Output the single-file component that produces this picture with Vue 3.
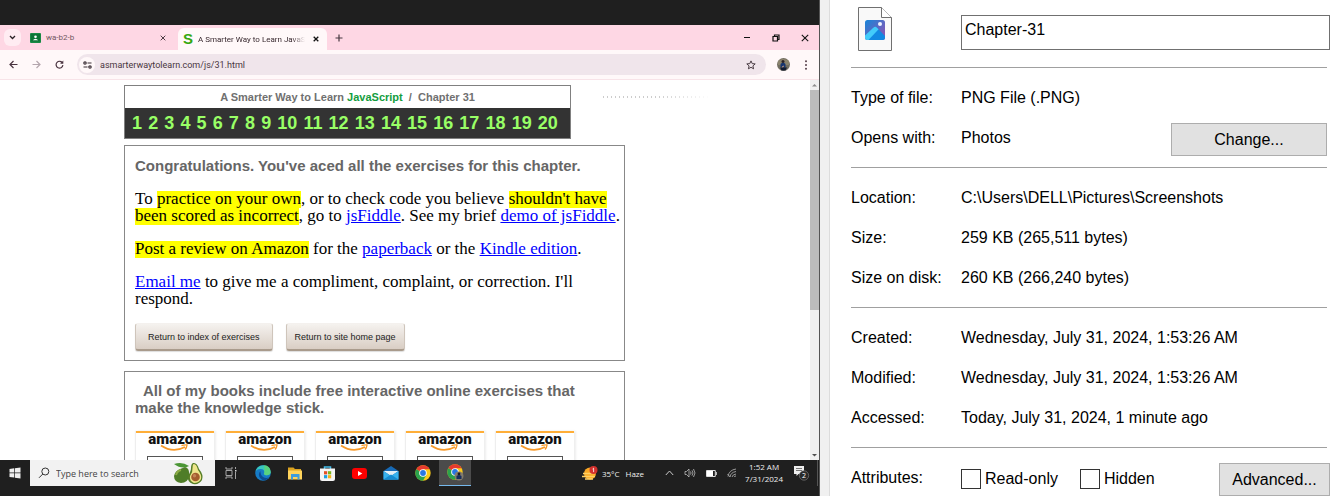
<script setup>
import { ref } from 'vue'

const chapters = Array.from({ length: 20 }, (_, i) => i + 1)
const books = [1, 2, 3, 4, 5]
const url = ref('asmarterwaytolearn.com/js/31.html')
const query = ref('')
const fileName = ref('Chapter-31')
const readOnly = ref(false)
const hidden = ref(false)
const location = [
  ['Location:', 'C:\\Users\\DELL\\Pictures\\Screenshots'],
  ['Size:', '259 KB (265,511 bytes)'],
  ['Size on disk:', '260 KB (266,240 bytes)'],
]
const dates = [
  ['Created:', 'Wednesday, July 31, 2024, 1:53:26 AM'],
  ['Modified:', 'Wednesday, July 31, 2024, 1:53:26 AM'],
  ['Accessed:', 'Today, July 31, 2024, 1 minute ago'],
]
</script>

<template>
  <main class="screen">
    <section class="desktop">
      <div class="tabs">
        <button class="tab-menu" aria-label="Search tabs">
          <svg width="7" height="7" viewBox="0 0 7 7"><path d="M1 2l2.500 2.500L6 2" fill="none" stroke="#2a2226" stroke-width="1.300" /></svg>
        </button>
        <div class="tab">
          <svg width="11" height="10" viewBox="0 0 11 10"><rect width="11" height="10" rx="1" fill="#188a45" /><rect x="1" y="1" width="9" height="7.500" fill="#0c7436" /><circle cx="5.500" cy="3.800" r="1.300" fill="#fff" /><path d="M2.800 7.200q2.700-3 5.400 0z" fill="#fff" /></svg>
          <span class="tab-title">wa-b2-b</span>
          <button class="close" aria-label="Close tab"><svg width="6" height="6" viewBox="0 0 6 6"><path d="M.7.7l4.600 4.600M5.300.7L.7 5.300" stroke="#4d3d45" /></svg></button>
        </div>
        <div class="tab active">
          <span class="s-logo">S</span>
          <span class="tab-title">A Smarter Way to Learn JavaSc</span>
          <button class="close" aria-label="Close tab"><svg width="6" height="6" viewBox="0 0 6 6"><path d="M.7.7l4.600 4.600M5.300.7L.7 5.300" stroke="#111" stroke-width="1.300" /></svg></button>
        </div>
        <button class="new-tab" aria-label="New tab"><svg width="8" height="8" viewBox="0 0 8 8"><path d="M4 .5v7M.5 4h7" stroke="#463840" stroke-width="1.200" /></svg></button>
        <div class="window-controls">
          <button aria-label="Minimize"><svg width="8" height="8" viewBox="0 0 8 8"><path d="M1 3.500h6" stroke="#111" /></svg></button>
          <button aria-label="Restore"><svg width="8" height="8" viewBox="0 0 8 8"><path d="M1 2.500h4.500V7H1zM2.500 2.500V1H7v4.500H5.500" fill="none" stroke="#111" stroke-width="1.200" /></svg></button>
          <button aria-label="Close"><svg width="8" height="8" viewBox="0 0 8 8"><path d="M.8.8l6.400 6.400M7.200.8L.8 7.200" stroke="#111" stroke-width="1.100" /></svg></button>
        </div>
      </div>

      <div class="toolbar">
        <div class="nav-buttons">
          <button aria-label="Back"><svg width="9" height="9" viewBox="0 0 9 9"><path d="M8.500 4.500H1M4.500 1L1 4.500 4.500 8" fill="none" stroke="#4a3440" stroke-width="1.200" /></svg></button>
          <button aria-label="Forward"><svg width="9" height="9" viewBox="0 0 9 9"><path d="M.5 4.500H8M4.500 1L8 4.500 4.500 8" fill="none" stroke="#b4a6ad" stroke-width="1.200" /></svg></button>
          <button aria-label="Reload"><svg width="9" height="9" viewBox="0 0 9 9"><path d="M7.500 3A3.400 3.400 0 1 0 7.900 5.200" fill="none" stroke="#4a3440" stroke-width="1.200" /><path d="M8.300.6v3.200H5.100z" fill="#4a3440" /></svg></button>
        </div>
        <div class="omnibox">
          <span class="site-info"><svg width="9" height="8" viewBox="0 0 9 8"><g fill="none" stroke="#3b2f35" stroke-width="1.200"><circle cx="2" cy="2" r="1.200" /><path d="M4.500 2h4M.5 6h4" /><circle cx="7" cy="6" r="1.200" /></g></svg></span>
          <input v-model="url" aria-label="Address" />
          <button aria-label="Bookmark"><svg width="10" height="10" viewBox="0 0 10 10"><path d="M5 .9l1.200 2.700 3 .3-2.300 2 .7 2.900L5 7.300 2.400 8.800l.7-2.900-2.300-2 3-.3z" fill="none" stroke="#4a3d44" /></svg></button>
        </div>
        <svg width="13" height="13" viewBox="0 0 13 13"><circle cx="6.500" cy="6.500" r="6.500" fill="#716d60" /><path d="M1 3q5-4 11 0v4H1z" fill="#8b846e" /><circle cx="6" cy="3.500" r="1.500" fill="#2b2224" /><path d="M3.500 9V6q2.500-2.500 5 0v4z" fill="#18366f" /><path d="M3 9.500h7L8.500 12.500h-4z" fill="#131c32" /><path d="M5 9l2-1" stroke="#c99779" /></svg>
        <button class="more" aria-label="Menu"><svg width="4" height="10" viewBox="0 0 4 10"><g fill="#56404b"><circle cx="2" cy="1.200" r="1" /><circle cx="2" cy="5" r="1" /><circle cx="2" cy="8.800" r="1" /></g></svg></button>
      </div>

      <div class="page">
        <div class="content">
          <div class="top-row">
            <header class="chapter-head">
              <div class="chapter-title">A Smarter Way to Learn <b>JavaScript</b> &nbsp;/&nbsp; Chapter 31</div>
              <nav class="numbers"><a v-for="n in chapters" :key="n" href="#">{{ n }}</a></nav>
            </header>
            <div class="dots"></div>
          </div>
          <article class="box">
            <h2>Congratulations. You've aced all the exercises for this chapter.</h2>
            <p>To <mark>practice on your own</mark>, or to check code you believe <mark>shouldn't have<br>been scored as incorrect</mark>, go to <a href="#">jsFiddle</a>. See my brief <a href="#">demo of jsFiddle</a>.</p>
            <p><mark>Post a review on Amazon</mark> for the <a href="#">paperback</a> or the <a href="#">Kindle edition</a>.</p>
            <p><a href="#">Email me</a> to give me a compliment, complaint, or correction. I'll<br>respond.</p>
            <div class="actions">
              <button>Return to index of exercises</button>
              <button>Return to site home page</button>
            </div>
          </article>
          <article class="box books">
            <h2><span class="indent">All of my books include free interactive online exercises that</span><br>make the knowledge stick.</h2>
            <div class="cards">
              <div v-for="b in books" :key="b" class="card">
                <span class="amazon">amazon</span>
                <svg width="30" height="8" viewBox="0 0 30 8"><path d="M1 1.500q12 8 24 1.500" fill="none" stroke="#f79a2b" stroke-width="1.700" /><path d="M21.500 1.600q3-1 5.500-.6-.2 2.500-2 4.500" fill="none" stroke="#f79a2b" stroke-width="1.400" /></svg>
                <div class="cover"></div>
              </div>
            </div>
          </article>
        </div>
        <div class="scrollbar">
          <svg width="9" height="10" viewBox="0 0 9 10"><path d="M2 6.500h5L4.500 4z" fill="#8b8b8b" /></svg>
          <div class="track"><div class="thumb"></div></div>
          <svg width="9" height="10" viewBox="0 0 9 10"><path d="M2 4h5L4.500 6.500z" fill="#505050" /></svg>
        </div>
      </div>

      <footer class="taskbar">
        <button class="start" aria-label="Start"><svg width="12" height="12" viewBox="0 0 12 12"><path d="M.5 2l4.700-.7v4.300H.5zM5.900 1.200L11.500.4v5.200H5.900zM.5 6.300h4.700v4.300l-4.700-.7zM5.900 6.300h5.600v5.300l-5.600-.8z" fill="#eee" /></svg></button>
        <div class="search">
          <svg width="12" height="12" viewBox="0 0 12 12"><circle cx="7.300" cy="4.500" r="3.500" fill="none" stroke="#333" /><path d="M4.800 7L1 10.800" stroke="#333" /></svg>
          <input v-model="query" placeholder="Type here to search" aria-label="Type here to search" />
          <svg width="32" height="23" viewBox="0 0 32 23"><path d="M1 2Q9-1 16 4 9 8 1 2" fill="#4b9635" /><path d="M12 5q5 1 4 9-1 7-8 7-7-1-7-7 1-5 6-7 3-1 5-2" fill="#4f7d28" /><path d="M3 13q1-4 5-5" fill="none" stroke="#8fac46" stroke-width="2" /><path d="M20 1q4-1 6 6 5 6 3 11-3 5-9 4-6-2-5-8 3-5 3-8 0-4 2-5" fill="#567e27" /><path d="M20.500 2q3-.5 4.500 6 4 5 3 9-2 4-7 4-5-2-4-7 3-4 2.500-8 0-3 1-4" fill="#eee58b" /><circle cx="22.500" cy="15" r="4.300" fill="#a45d2e" /><circle cx="21.500" cy="13.800" r="1.700" fill="#c38455" /></svg>
        </div>
        <div class="apps">
          <button aria-label="Task view"><svg width="12" height="12" viewBox="0 0 12 12"><path d="M1 0v2h6V0M1 12v-2h6v2M1 3.500h6v5H1zM10.500 0v2M10.500 5v7" fill="none" stroke="#a5a5a5" /><path d="M10 3h1.500v1.500H10z" fill="#ddd" /></svg></button>
          <button aria-label="Edge"><svg width="16" height="16" viewBox="0 0 16 16"><circle cx="8" cy="8" r="7.800" fill="#167bc6" /><path d="M.3 7Q2 .2 8.500.2q7 .3 7.200 7Q15 11 10 10q-2-.8-.7-2.200Q9.800 4 5.500 4 1.500 4 .3 7" fill="#39c8bb" /><path d="M9 .3q6.500.4 6.700 6.900Q15 11 10 10q-2-.8-.7-2.200Q10 3 9 .3" fill="#65d665" opacity=".7" /><path d="M5.500 6q-3.500 4 .5 8 4 3 8-1.500-3 1.200-6-.5Q5 9.500 5.500 6" fill="#0d4c91" /></svg></button>
          <button aria-label="File Explorer"><svg width="14" height="13" viewBox="0 0 14 13"><path d="M0 .5h5.500L7 2h6v3H0z" fill="#dba321" /><path d="M0 3.500h14v9H0z" fill="#ffd45c" /><path d="M3 7h8.500v5.500h-2V10H5v2.500H3z" fill="#3d9ddd" /></svg></button>
          <button aria-label="Store"><svg width="15" height="15" viewBox="0 0 15 15"><path d="M4.500 3V1h6v2" fill="none" stroke="#47bde9" stroke-width="1.500" /><path d="M0 2.500h15V13q0 2-2 2H2q-2 0-2-2z" fill="#f5f5f5" /><path d="M4 5.200h3.200v3.200H4z" fill="#e45126" /><path d="M8 5.200h3.200v3.200H8z" fill="#7ab51d" /><path d="M4 9.100h3.200v3.200H4z" fill="#1ca1e1" /><path d="M8 9.100h3.200v3.200H8z" fill="#f4b51c" /></svg></button>
          <button aria-label="YouTube"><svg width="15" height="11" viewBox="0 0 15 11"><rect width="15" height="11" rx="3" fill="#f00" /><path d="M6 3l4.300 2.500L6 8z" fill="#fff" /></svg></button>
          <button aria-label="Mail"><svg width="16" height="14" viewBox="0 0 16 14"><path d="M.5 5L8 0l7.500 5v8.500H.5z" fill="#176ab6" /><path d="M.5 5h15L8 10z" fill="#e4eef5" /><path d="M.5 5L8 10l7.500-5v8.500H.5z" fill="#38b2ee" /><path d="M.5 13.500L8 8.500l7.500 5z" fill="#168bd1" /></svg></button>
          <button aria-label="Chrome"><svg width="16" height="16" viewBox="0 0 16 16"><circle cx="8" cy="8" r="7.700" fill="#fac918" /><path d="M8 8L1.300 4.200A7.700 7.700 0 0 1 14.700 4.200H8z" fill="#e63a2e" /><path d="M1.300 4.200A7.700 7.700 0 0 0 8 15.700L11.300 10 8 8z" fill="#2aa24c" /><circle cx="8" cy="8" r="3.800" fill="#fff" /><circle cx="8" cy="8" r="2.900" fill="#2877e3" /></svg></button>
          <button class="running" aria-label="Chrome profile"><svg width="17" height="17" viewBox="0 0 17 17"><circle cx="8" cy="8" r="7.700" fill="#fac918" /><path d="M8 8L1.300 4.200A7.700 7.700 0 0 1 14.700 4.200H8z" fill="#e63a2e" /><path d="M1.300 4.200A7.700 7.700 0 0 0 8 15.700L11.300 10 8 8z" fill="#2aa24c" /><circle cx="8" cy="8" r="3.800" fill="#fff" /><circle cx="8" cy="8" r="2.900" fill="#2877e3" /><circle cx="12" cy="12" r="4.500" fill="#827b6d" /><circle cx="12" cy="10" r="1.400" fill="#211b1d" /><path d="M9.500 15v-3q2.500-2 5 0v3z" fill="#172d5d" /></svg></button>
        </div>
        <div class="tray">
          <svg width="16" height="15" viewBox="0 0 16 15"><circle cx="8" cy="7.500" r="6" fill="#f9a825" /><path d="M1 7.500h12M0 10.500h13M3 13h8" stroke="#ffd165" stroke-width="1.500" /><circle cx="11.500" cy="4" r="4" fill="#d3302d" /><path d="M10.600 3l1-.8v3.900" fill="none" stroke="#fff" stroke-width=".8" /></svg>
          <span class="weather"><span>35°C</span><span>Haze</span></span>
          <svg width="9" height="6" viewBox="0 0 9 6"><path d="M.8 5l3.700-4 3.700 4" fill="none" stroke="#ccc" /></svg>
          <svg width="12" height="10" viewBox="0 0 12 10"><path d="M1 3.500h1.500L5 1v8L2.500 6.500H1zM6.500 3.500q1.200 1.500 0 3M8 2.300q2 2.700 0 5.400M9.500 1q3 4 0 8" fill="none" stroke="#bbb" stroke-width=".8" /></svg>
          <svg width="11" height="7" viewBox="0 0 11 7"><path d="M.5.5h8.800v6H.5zM10.300 2v3" fill="none" stroke="#ddd" /><path d="M1 1h6v5H1z" fill="#fff" /></svg>
          <svg width="10" height="10" viewBox="0 0 10 10"><path d="M1 8.500Q2 2 9 1M3 9Q3.500 4.500 9 3.500M5 9q.5-2.500 4-3M7 9q.4-1 2-1M.5 6L3 9" fill="none" stroke="#999" /></svg>
          <div class="clock"><span>1:52 AM</span><span>7/31/2024</span></div>
          <svg width="17" height="16" viewBox="0 0 17 16"><path d="M1 1h10v8H5.500L3.500 11V9H1z" fill="#eee" /><path d="M3 3.500h6M3 5.500h6" stroke="#555" stroke-width=".8" /><circle cx="11" cy="10.500" r="4.700" fill="#292929" stroke="#777" stroke-width=".7" /><text x="11" y="13" text-anchor="middle" font-family="Open Sans, sans-serif" font-size="7" fill="#fff">2</text></svg>
          <i class="show-desktop"></i>
        </div>
      </footer>
    </section>

    <div class="gutter"></div>

    <form class="properties" @submit.prevent>
      <div class="file-head">
        <svg class="file-icon" width="34" height="44" viewBox="0 0 34 44"><defs><linearGradient id="sky" x1="0" y1="0" x2="1" y2="1"><stop stop-color="#1686d9" /><stop offset="1" stop-color="#9a4fb0" /></linearGradient><clipPath id="tile"><rect x="7" y="13" width="20" height="20" rx="2.500" /></clipPath></defs><path d="M.5.5h23L33.500 10.500v33H.5z" fill="#f9f9f9" stroke="#707070" /><path d="M23.500.5v10h10" fill="#fff" stroke="#707070" /><g clip-path="url(#tile)"><path d="M7 13h20v20H7z" fill="url(#sky)" /><path d="M8 34L17 20.500 19 20.700 28 30v4z" fill="#1289e2" /><path d="M6 29.500L15.300 20.700Q17.200 19 19 20.700L20.600 22.300 9.500 34H6z" fill="#42cbfa" /></g><circle cx="22" cy="17" r="2" fill="#eef3ff" /></svg>
        <input v-model="fileName" aria-label="File name" />
      </div>
      <div class="group">
        <div class="row"><span>Type of file:</span><span>PNG File (.PNG)</span></div>
        <div class="row"><span>Opens with:</span><span>Photos</span><button class="change" type="button">Change...</button></div>
      </div>
      <div class="group">
        <div v-for="r in location" :key="r[0]" class="row"><span>{{ r[0] }}</span><span>{{ r[1] }}</span></div>
      </div>
      <div class="group">
        <div v-for="r in dates" :key="r[0]" class="row"><span>{{ r[0] }}</span><span>{{ r[1] }}</span></div>
      </div>
      <div class="group">
        <div class="row">
          <span>Attributes:</span>
          <div class="checks">
            <label><input v-model="readOnly" type="checkbox" />Read-only</label>
            <label><input v-model="hidden" type="checkbox" />Hidden</label>
          </div>
          <button class="advanced" type="button">Advanced...</button>
        </div>
      </div>
    </form>
  </main>
</template>

<style>
body { background: #fff; }
</style>

<style scoped>
* { box-sizing: border-box; }
svg { display: block; flex: none; }
button { font: inherit; color: inherit; padding: 0; border: 0; background: none; }
input { font: inherit; color: inherit; margin: 0; padding: 0; border: 0; border-radius: 0; background: none; min-width: 0; outline: none; }
.screen { display: grid; grid-template-columns: minmax(0, 820fr) 10px minmax(0, 512fr); grid-template-rows: minmax(0, 1fr); height: 100vh; overflow: hidden; font-family: "Liberation Sans", Arial, sans-serif; }
.gutter { background: #f0f0f0; border-right: 1px solid #dcdcdc; }

.desktop { display: flex; flex-direction: column; min-height: 0; padding: 25px 0 10px; background: #1f1f1f; font-family: "Open Sans", "Noto Sans", sans-serif; border-right: 1px solid #555; }
.tabs { display: flex; align-items: center; height: 25px; flex: none; background: #fed7e4; padding-left: 4px; font-family: Roboto, sans-serif; font-size: 8px; color: #71585f; }
.tab-menu { width: 17px; height: 17px; border-radius: 6px; background: #ffecf2; display: grid; place-items: center; }
.tab { display: flex; align-items: center; gap: 5px; width: 148px; height: 22px; padding: 0 3px 0 9px; }
.tab.active { align-self: flex-end; width: 149px; gap: 4px; margin-left: 9px; padding: 0 8px 0 5px; border-radius: 6px 6px 0 0; background: #fff8f9; color: #38292f; }
.tab-title { flex: 1; min-width: 0; white-space: nowrap; }
.active .tab-title { mask-image: linear-gradient(90deg, #000 88%, transparent); margin-right: 4px; }
.s-logo { width: 11px; font: bold 15px/20px "Liberation Sans", Arial, sans-serif; color: #35a80f; }
.new-tab { margin-left: 8px; }
.window-controls { display: flex; gap: 21px; margin-left: auto; padding-right: 10px; }
.toolbar { display: flex; align-items: center; height: 30px; flex: none; padding: 0 11px 0 9px; background: #fff8f9; border-bottom: 1px solid #f8e3e8; }
.nav-buttons { display: flex; gap: 14px; margin-right: 13px; }
.omnibox { display: flex; align-items: center; flex: 1; height: 21px; margin-right: 11px; padding: 0 10px 0 2px; border-radius: 11px; background: #f0e5eb; font-family: Roboto, sans-serif; font-size: 9px; color: #49353e; }
.omnibox input { flex: 1; }
.site-info { width: 16px; height: 16px; margin-right: 5px; display: grid; place-items: center; border-radius: 50%; background: #fff8f9; }
.more { margin-left: 14px; }

.page { display: flex; flex: 1; min-height: 0; overflow: hidden; background: #fff; }
.content { flex: 1; padding: 5px 0 0 124px; }
.top-row { display: flex; gap: 32px; margin-bottom: 6px; }
.chapter-head { width: 447px; border: 1px solid #808080; font-family: "Liberation Sans", Arial, sans-serif; }
.chapter-title { line-height: 22px; text-align: center; font-size: 11px; font-weight: bold; color: #707070; }
.chapter-title b { color: #139d3e; }
.numbers { display: flex; justify-content: space-between; padding: 0 12px 0 7px; background: #333; font-size: 18px; line-height: 30px; font-weight: bold; }
.numbers a { color: #99ff66; text-decoration: none; }
.dots { width: 108px; height: 2px; margin-top: 11px; background: repeating-linear-gradient(90deg, #ccc 0 1px, transparent 1px 4px); mask-image: linear-gradient(90deg, #000 50%, transparent); }
.box { width: 501px; padding: 11px 0 9px 10px; margin-bottom: 10px; border: 1px solid #888; }
.box h2 { margin: 0 0 16px; font: bold 15px/17px "Liberation Sans", Arial, sans-serif; color: #666; white-space: nowrap; }
.books.box { padding-top: 10px; }
.books h2 { margin-bottom: 15px; }
.indent { margin-left: 8px; }
.box p { margin: 0 0 16px; font: 17px/17px Georgia, "Liberation Serif", serif; color: #000; white-space: nowrap; }
.box p a { color: #00f; }
.box mark { background: linear-gradient(transparent 2px, #ff0 2px); color: #000; box-decoration-break: clone; -webkit-box-decoration-break: clone; }
.actions { display: flex; gap: 13px; }
.actions button { height: 28px; padding: 0 12px; border: 1px solid #cfc5bb; border-top-color: #f4f1ee; border-bottom: 2px solid #a99b8c; border-radius: 3px; background: linear-gradient(#f5f2ef, #d9cec4); font: 9px "Liberation Sans", Arial, sans-serif; color: #222; box-shadow: 0 1px 1px #ddd; }
.actions button + button { padding: 0 8px; }
.cards { display: flex; gap: 12px; margin-left: 1px; }
.card { display: flex; flex-direction: column; align-items: center; width: 78px; border-top: 2px solid #ffae37; box-shadow: 2px 0 2px #eee, -1px 0 1px #eee; }
.amazon { font: 900 15px/12px Roboto, sans-serif; color: #111; }
.card svg { margin-top: -1px; }
.cover { width: 56px; height: 70px; margin-top: 4px; border: 1px solid #555; }
.scrollbar { display: flex; flex-direction: column; width: 9px; background: #f0f0f0; }
.track { flex: 1; }
.thumb { height: 61%; background: #bcbcbc; }

.taskbar { display: flex; height: 26px; flex: none; color: #eee; font-size: 8px; }
.start { width: 30px; display: grid; place-items: center; }
.search { display: flex; align-items: center; width: 185px; gap: 6px; padding: 0 10px 0 8px; background: #f2f2f2; color: #444; font-size: 9px; }
.search input { flex: 1; }
.search input::placeholder { color: #444; opacity: 1; }
.apps { display: flex; }
.apps button { display: grid; place-items: center; width: 32px; }
.apps .running { background: #4b4b4b; border-bottom: 1px solid #76b9ed; }
.tray { display: flex; align-items: center; gap: 10px; margin-left: auto; padding-right: 1px; }
.weather { display: flex; gap: 6px; margin: 0 11px 0 -6px; }
.clock { display: flex; flex-direction: column; align-items: center; margin-left: -2px; line-height: 12px; font-size: 8px; }
.clock + svg { margin-right: -3px; }
.show-desktop { width: 1px; height: 26px; background: #555; }

.properties { padding: 0 12px 0 21px; font-size: 16px; color: #000; background: #fff; white-space: nowrap; }
.file-head { display: grid; grid-template-columns: 110px 1fr; height: 67px; padding-top: 7px; align-items: start; }
.file-icon { margin-left: 7px; }
.file-head input { height: 35px; margin-top: 8px; padding: 0 3px 5px; border: 1px solid #707070; }
.group { margin-right: 3px; padding: 10px 0 9px; border-top: 1px solid #a0a0a0; }
.row { display: grid; grid-template-columns: 110px 1fr auto; align-items: center; height: 40px; }
.row button { align-self: end; height: 33px; margin-bottom: 2px; border: 1px solid #adadad; background: #e1e1e1; }
.change { width: 156px; }
.advanced { width: 111px; margin-right: -3px; }
.checks { display: flex; gap: 22px; padding-top: 2px; }
.checks label { display: flex; align-items: center; gap: 4px; }
.checks input { appearance: none; width: 20px; height: 20px; border: 1px solid #333; background: #fff; }
.checks input:checked { background: #333; }
</style>
